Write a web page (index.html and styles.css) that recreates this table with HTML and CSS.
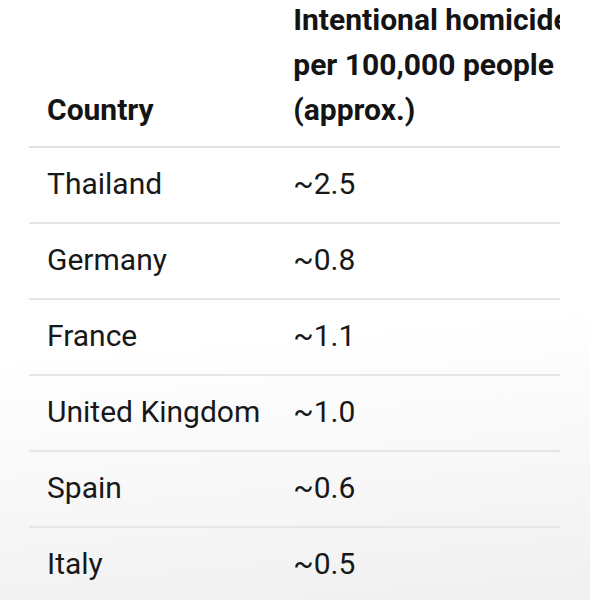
FILE: index.html
```html
<!DOCTYPE html>
<html lang="en">
<head>
  <meta charset="UTF-8" />
  <meta name="viewport" content="width=device-width, initial-scale=1.0"/>
  <title>Homicide rates</title>
  <link rel="stylesheet" href="styles.css">
</head>
<body>
  <div class="table-wrap">
    <table class="rates">
      <thead>
        <tr>
          <th class="country">Country</th>
          <th class="rate">Intentional homicide<br>per 100,000 people<br>(approx.)</th>
        </tr>
      </thead>
      <tbody>
        <tr><td class="country">Thailand</td><td class="rate">~2.5</td></tr>
        <tr><td class="country">Germany</td><td class="rate">~0.8</td></tr>
        <tr><td class="country">France</td><td class="rate">~1.1</td></tr>
        <tr><td class="country">United Kingdom</td><td class="rate">~1.0</td></tr>
        <tr><td class="country">Spain</td><td class="rate">~0.6</td></tr>
        <tr><td class="country">Italy</td><td class="rate">~0.5</td></tr>
      </tbody>
    </table>
  </div>
</body>
</html>
```
FILE: styles.css
```css
body {
  font-family: Roboto, 'Liberation Sans', sans-serif;
  background: linear-gradient(175deg, #ffffff 0%, #ffffff 55%, #f0f0f0 100%);
  color: #181818;
  margin: 0;
  height: 600px;
  overflow: hidden;
}

.table-wrap {
  margin: -4px 0 0 29px;
  width: 531px;
  overflow: hidden;
}

.rates {
  border-collapse: collapse;
  width: 640px;
  font-size: 30px;
}

.rates th {
  font-weight: 700;
  color: #141414;
  text-align: left;
  vertical-align: bottom;
  line-height: 45px;
  padding-bottom: 14px;
  white-space: nowrap;
  border-bottom: 2px solid #e2e2e2;
}

.rates td {
  line-height: 36px;
  padding-top: 18px;
  padding-bottom: 20px;
  border-bottom: 2px solid #e6e6e6;
  white-space: nowrap;
}

.rates .country {
  width: 1%;
  padding-left: 18px;
  padding-right: 16px;
}

.rates .rate {
  padding-left: 17px;
}

.rates tbody tr:last-child td {
  border-bottom: none;
}
```
